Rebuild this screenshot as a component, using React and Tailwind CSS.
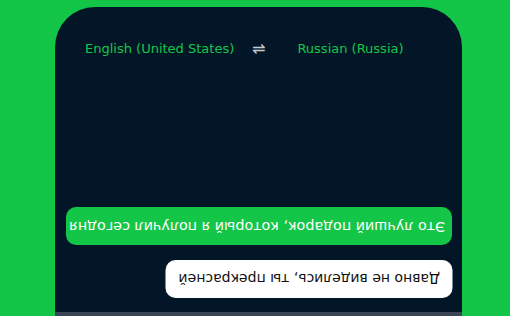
import React from "react";

const messages = [
  { id: 1, text: "Это лучший подарок, который я получил сегодня", mine: true },
  { id: 2, text: "Давно не виделись, ты прекрасней", mine: false },
];

export default function App() {
  return (
    <div className="h-[316px] w-[510px] overflow-hidden bg-[#14c647] pt-[7px] font-['DejaVu_Sans',sans-serif]">
      <div className="mx-[55px] w-[407px] h-[309px] flex flex-col rounded-t-[40px] bg-[#031627]">
        <div className="flex items-center pt-[32px] pl-[30px] text-[13px] text-[#14c647]">
          <span className="w-[167px]">English (United States)</span>
          <span className="text-[#c9ced4] text-[16px] leading-none">⇌</span>
          <span className="ml-[32px]">Russian (Russia)</span>
        </div>
        <div className="flex-1 flex flex-col justify-end gap-[15px] px-[10px] pl-[11px] pb-[14px]">
          {messages.map((m) => (
            <div
              key={m.id}
              className={
                m.mine
                  ? "rotate-180 self-stretch h-[38px] flex items-center whitespace-nowrap rounded-[10px] bg-[#14c647] px-[7px] text-[14.3px] text-white"
                  : "rotate-180 self-end h-[38px] flex items-center whitespace-nowrap rounded-[10px] bg-white px-[12.5px] text-[14px] text-[#111]"
              }
            >
              {m.text}
            </div>
          ))}
        </div>
        <div className="h-[4px] bg-[#3a4656]" />
      </div>
    </div>
  );
}
